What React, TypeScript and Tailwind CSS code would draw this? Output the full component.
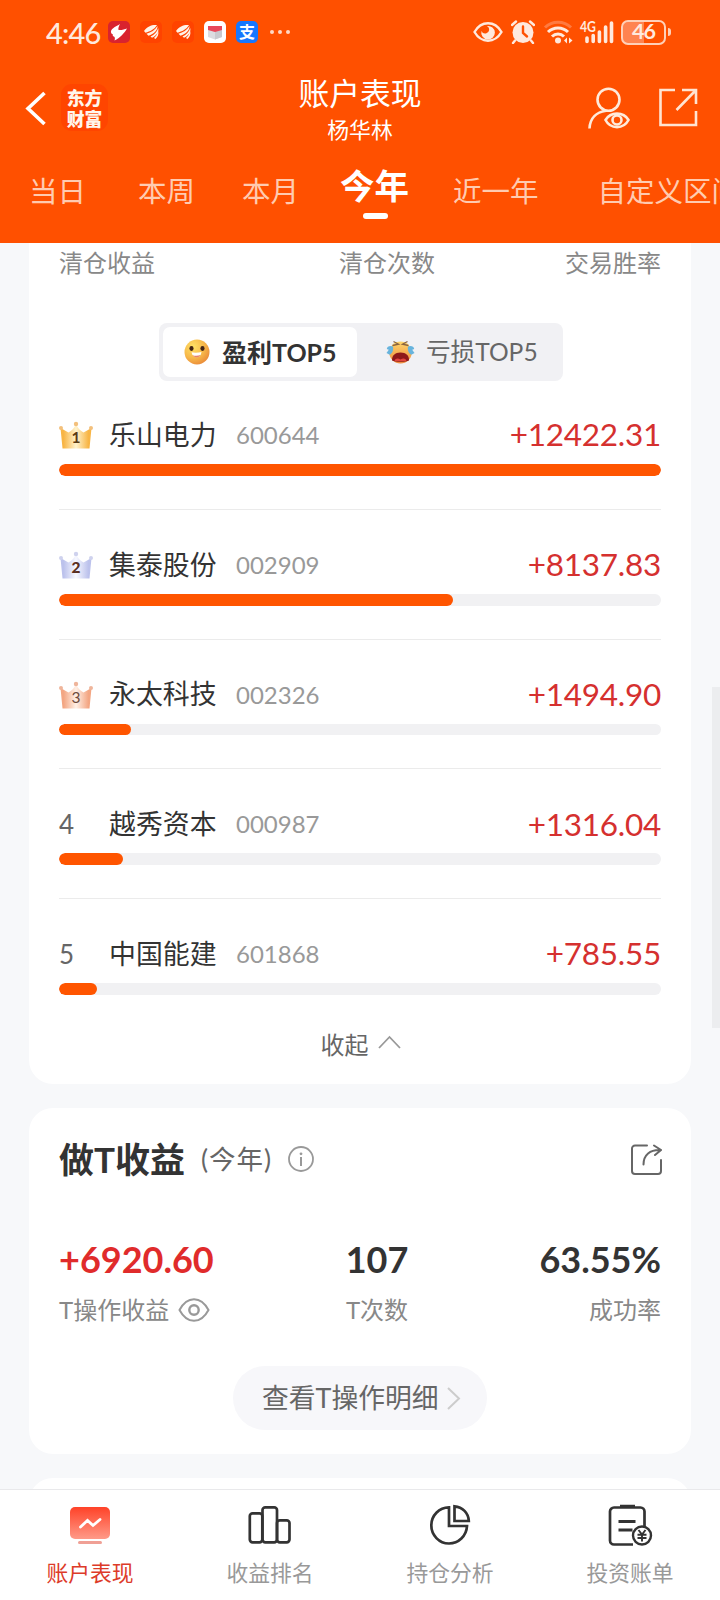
import type { ReactNode } from 'react';

const tabs = [
  { label: '当日', className: 'ml-[29px]' },
  { label: '本周', className: 'ml-[52px]' },
  { label: '本月', className: 'ml-[47px]' },
  { label: '今年', className: 'ml-[41px]', active: true },
  { label: '近一年', className: 'ml-[44px]' },
  { label: '自定义区间', className: 'ml-[59px]' },
];

const stocks = [
  { name: '乐山电力', code: '600644', profit: '+12422.31', width: 602 },
  { name: '集泰股份', code: '002909', profit: '+8137.83', width: 394 },
  { name: '永太科技', code: '002326', profit: '+1494.90', width: 72 },
  { name: '越秀资本', code: '000987', profit: '+1316.04', width: 64 },
  { name: '中国能建', code: '601868', profit: '+785.55', width: 38 },
];

const crowns = [
  { edge: '#f8b545', mid: '#fff3cd', knob: '#f3c07c', text: '#5a3a14', weight: 700 },
  { edge: '#bcc2ec', mid: '#f7f8ff', knob: '#cfd2ee', text: '#5b2f22', weight: 900 },
  { edge: '#f3a683', mid: '#fff0e6', knob: '#efb59b', text: '#6d4a3c', weight: 400 },
];

function StatusBar() {
  return (
    <div className="flex h-16 items-center pl-[46px] text-[#ffe9dd]">
      <span className="w-[55px] text-[29px] font-medium leading-none tracking-[-0.800px]">4:46</span>
      <div className="ml-[7px] flex gap-[10px]">
        <svg width="22" height="22" viewBox="0 0 22 22">
          <rect width="22" height="22" rx="5" fill="#d9232e" />
          <path d="M3 10C4 7 8 5.500 12 3c-1 2-2 4-1.500 6 3 .3 6-.5 8.500-1.500C16.500 12 12 17 6.500 19.500c.5-1.500.7-3-.5-4-1.300-.3-1.500-1-1-2C3.500 13 2.700 11.500 3 10z" fill="#fff" />
        </svg>
        {[0, 1].map((i) => (
          <svg key={i} width="22" height="22" viewBox="0 0 22 22">
            <rect width="22" height="22" rx="5" fill="#ff4300" />
            <path
              d="M4 10C7.500 5 12 3.500 17 4c-2.500 4.500-7 6.500-11.500 7.700zM6.500 12.800C11 11.500 15 9 17.500 5c.3 4-3.500 8-9 9.800zM10.500 15.500c4-2 6.500-4.500 7.700-8.500 1 4-2 7.800-6.200 9.800zM14 17c2-1.700 3.500-4 4.200-7 .8 3-.5 6-2.700 8z"
              fill="#fff3e8"
            />
          </svg>
        ))}
        <svg width="22" height="22" viewBox="0 0 22 22">
          <rect width="22" height="22" rx="5" fill="#fff" />
          <path d="M4 8l7 2.500L18 8v8l-7 2.500L4 16z" fill="#dcdce0" />
          <path d="M11 10.500L18 8v8l-7 2.500z" fill="#c9c9ce" />
          <path d="M4 5h14v4l-7 2-7-2z" fill="#e8485a" />
        </svg>
        <span className="flex size-[22px] items-center justify-center rounded-[5px] bg-[#1677ff] text-[16px] font-bold leading-none text-white">
          支
        </span>
      </div>
      <div className="ml-[12px] flex gap-[4px]">
        <i className="size-[4px] rounded-full bg-[#ffd9c4]" />
        <i className="size-[4px] rounded-full bg-[#ffd9c4]" />
        <i className="size-[4px] rounded-full bg-[#ffd9c4]" />
      </div>
      <div className="ml-auto mr-[49px] flex items-center">
        <svg width="30" height="20" viewBox="0 0 30 20" fill="none">
          <path d="M1.500 10C5 4 9.500 1.300 15 1.300S25 4 28.500 10C25 16 20.500 18.700 15 18.700S5 16 1.500 10z" stroke="currentColor" strokeWidth="2.400" />
          <path d="M14 4a4 4 0 0 1-1 7.500A4 4 0 0 1 8.500 9 6.800 6.800 0 1 0 14 4z" fill="currentColor" />
        </svg>
        <svg className="ml-[8px]" width="24" height="24" viewBox="0 0 24 24" fill="none">
          <circle cx="12" cy="12.500" r="10.500" fill="currentColor" />
          <path d="M1 5l4-3.500M23 5l-4-3.500M4 20.500L2 23M20 20.500l2 2.500" stroke="currentColor" strokeWidth="2.400" strokeLinecap="round" />
          <path d="M12 6.500V13l4 3.500" stroke="#ff5000" strokeWidth="2.400" strokeLinecap="round" />
        </svg>
        <svg className="ml-[8px]" width="30" height="24" viewBox="0 0 30 24" fill="none">
          <path d="M2 7.500C9 .5 21 .5 28 7.500" stroke="#ff7a40" strokeWidth="3" />
          <path d="M5 12c5.500-5.500 14.500-5.500 20 0" stroke="currentColor" strokeWidth="3" />
          <path d="M9 16.500c3.500-3.500 8.500-3.500 12 0" stroke="currentColor" strokeWidth="3" />
          <circle cx="15" cy="20.500" r="3" fill="currentColor" />
          <path d="M21 20.500l3-3v6zM29.500 20.500l-3.500-3v6z" fill="currentColor" />
        </svg>
        <svg className="ml-[7px] overflow-visible" width="34" height="24" viewBox="0 0 34 24">
          <text x="0" y="11.500" fontSize="14.500" fontWeight="700" fill="currentColor" textLength="16" lengthAdjust="spacingAndGlyphs">4G</text>
          <path d="M7 18v3.500M13.200 15.500v6M19.400 12v9.500M25.600 7v14.500M31.500 3v18.500" stroke="currentColor" strokeWidth="3.600" strokeLinecap="round" />
        </svg>
        <div className="ml-[7px] flex h-[25px] w-[45px] items-center justify-center rounded-[7px] border-2 border-[#ffd0b8] bg-linear-to-r from-[#ff8350] from-50% to-[#ff5000] to-50% text-[21.500px] font-bold leading-none tracking-[-1px]">
          46
        </div>
        <span className="ml-[2px] h-[8px] w-[3px] rounded-r-full bg-[#ffd0b8]" />
      </div>
    </div>
  );
}

function TitleBar() {
  return (
    <div className="flex h-[88px] items-start pl-[24px] pr-[22px]">
      <div className="flex w-[180px] items-center pt-[20px]">
        <svg width="24" height="36" viewBox="0 0 24 36" fill="none">
          <path d="M20.500 3L4 18.500 20.500 34" stroke="#fff" strokeWidth="3.600" />
        </svg>
        <div className="ml-[13px] flex size-[47px] flex-col items-center justify-center rounded-[11px] bg-[#ff4500] font-['Noto_Sans_CJK_SC',sans-serif] text-[17.800px] font-black leading-[20.500px] text-[#fff6ec]">
          <span>东方</span>
          <span>财富</span>
        </div>
      </div>
      <div className="flex flex-1 flex-col items-center pr-[2px] text-white">
        <h1 className="mt-[13px] text-[30.800px] leading-[34px]">账户表现</h1>
        <p className="mt-[6px] text-[21.800px] leading-[26px]">杨华林</p>
      </div>
      <div className="flex w-[180px] justify-end gap-[28px] pt-[23px]">
        <svg width="42" height="43" viewBox="0 0 42 43" fill="none" stroke="#ffeada" strokeWidth="2.600">
          <circle cx="20.500" cy="12.700" r="11" />
          <path d="M1.500 41.500C2 31 8.500 25 18 23.700" />
          <path d="M17.500 33c5-8.500 18-8.500 23 0-5 9.500-18 9.500-23 0z" />
          <circle cx="29" cy="33" r="4.500" />
        </svg>
        <svg width="40" height="40" viewBox="0 0 40 40" fill="none" stroke="#ffe4d2" strokeWidth="2.600">
          <path d="M17 3H2.500v35H38V24M24 3h14v14M38 3L18.500 23" />
        </svg>
      </div>
    </div>
  );
}

function Tabs() {
  return (
    <nav className="flex h-[91px] items-start overflow-hidden whitespace-nowrap pt-[14px]">
      {tabs.map((tab) =>
        tab.active ? (
          <div key={tab.label} className={`${tab.className} flex shrink-0 flex-col items-center`}>
            <span className="text-[34.500px] font-bold leading-[40px] text-white">{tab.label}</span>
            <span className="ml-[2px] mt-[7px] h-[6px] w-[25px] rounded-full bg-white" />
          </div>
        ) : (
          <span key={tab.label} className={`${tab.className} shrink-0 pt-[5px] text-[28.500px] leading-[40px] text-[#ffcbb0]`}>
            {tab.label}
          </span>
        ),
      )}
    </nav>
  );
}

function SmileFace() {
  return (
    <svg width="26" height="26" viewBox="0 0 26 26">
      <defs>
        <radialGradient id="smile" cx=".35" cy=".3" r=".8">
          <stop offset="0" stopColor="#ffe266" />
          <stop offset=".55" stopColor="#f7b84a" />
          <stop offset="1" stopColor="#e88436" />
        </radialGradient>
      </defs>
      <circle cx="13" cy="13" r="12.500" fill="url(#smile)" />
      <ellipse cx="7.500" cy="9.500" rx="2.100" ry="2.400" fill="#432415" />
      <ellipse cx="18.500" cy="9.500" rx="2.100" ry="2.400" fill="#432415" />
      <path d="M7.500 13.200c3 .7 7 .5 10-.3-.4 3.500-2.300 5.300-4.800 5.300s-4.600-1.700-5.200-5z" fill="#fff" />
      <path d="M8.700 16.200c2.300.8 5.500.6 7.900-.2-.8 1.600-2.200 2.400-3.900 2.400s-3.100-.8-4-2.200z" fill="#e8836a" />
    </svg>
  );
}

function CryFace() {
  return (
    <svg width="29" height="24" viewBox="0 0 29 24">
      <defs>
        <linearGradient id="cry" x1="0" y1="0" x2="0" y2="1">
          <stop offset="0" stopColor="#ffd76a" />
          <stop offset="1" stopColor="#ee8b3e" />
        </linearGradient>
      </defs>
      <ellipse cx="14.500" cy="12.500" rx="11.200" ry="11" fill="url(#cry)" />
      <path d="M7.500 1.500l5 2.700L6.500 5.500M21.500 1.500l-5 2.700 6 1.300" fill="none" stroke="#8a6440" strokeWidth="1.300" />
      <path d="M7 6.500C4 5 1 6.500.8 9l2 .7L.5 13l3.200 1.800C6 13.500 7.800 10.500 7 6.500zM22 6.500c3-1.500 6-.1 6.200 2.500l-2 .7 2.300 3.300-3.200 1.800C23 13.500 21.200 10.500 22 6.500z" fill="#68b4dd" />
      <path d="M6 20.500c-.3-5 3-8 8.500-8s8.800 3 8.500 8c-3 1.700-14 1.700-17 0z" fill="#8e1a1a" />
      <path d="M8.500 21c1-3 3.500-3 6-1.500 2.500-1.500 5-1.500 6 1.500z" fill="#e2463f" />
    </svg>
  );
}

function Crown({ rank }: { rank: number }) {
  const c = crowns[rank - 1];
  const id = `crown${rank}`;
  return (
    <svg width="34" height="28" viewBox="0 0 34 28">
      <defs>
        <linearGradient id={id}>
          <stop offset=".1" stopColor={c.edge} />
          <stop offset=".5" stopColor={c.mid} />
          <stop offset=".9" stopColor={c.edge} />
        </linearGradient>
      </defs>
      <path d="M1.500 7l8 4.500c3-1.500 6-4.500 7.500-8.500 1.500 4 4.500 7 7.500 8.500l8-4.500L30.500 27.500h-27z" fill={`url(#${id})`} />
      <circle cx="2" cy="7" r="2" fill={c.knob} />
      <circle cx="17" cy="3" r="2.200" fill={c.knob} />
      <circle cx="32" cy="7" r="2" fill={c.knob} />
      <text x="17" y="22" textAnchor="middle" fontFamily="Lato, sans-serif" fontSize="15.500" fontWeight={c.weight} fill={c.text}>
        {rank}
      </text>
    </svg>
  );
}

function RankCard() {
  return (
    <section className="h-[841px] rounded-b-[24px] bg-white px-[30px] pt-[8px]">
      <div className="flex justify-between text-[24px] leading-6 text-[#888]">
        <span>清仓收益</span>
        <span className="ml-[54px]">清仓次数</span>
        <span>交易胜率</span>
      </div>
      <div className="ml-[100px] mt-[48px] flex h-[58px] w-[404px] rounded-[8px] bg-[#f1f1f4] p-[4px] leading-none">
        <div className="flex w-[194px] items-center gap-[12px] rounded-[7px] bg-white pl-[21px] text-[25px] font-bold text-[#333]">
          <SmileFace />
          <span className="pt-px">盈利TOP5</span>
        </div>
        <div className="flex items-center gap-[11px] pl-[29px] text-[24.600px] text-[#666]">
          <CryFace />
          <span className="pt-px">亏损TOP5</span>
        </div>
      </div>
      <ul className="mt-[34px]">
        {stocks.map((stock, i) => (
          <li key={stock.code} className={i > 0 ? 'h-[129.700px] border-t border-[#ebebeb] pt-[35px]' : 'h-[94px]'}>
            <div className="flex h-[40px] items-center">
              <span className="w-[50px] text-[26px] leading-none text-[#666]">
                {i < 3 ? <Crown rank={i + 1} /> : i + 1}
              </span>
              <span className="w-[127px] text-[26.900px] leading-none text-[#333]">{stock.name}</span>
              <span className="text-[24px] leading-none text-[#999]">{stock.code}</span>
              <span className="ml-auto text-[31.500px] leading-none tracking-[-0.250px] text-[#d5302f]">{stock.profit}</span>
            </div>
            <div className="mt-[9px] h-[11.500px] overflow-hidden rounded-full bg-[#f1f1f3]">
              <div className="h-full rounded-full bg-[#ff5500]" style={{ width: stock.width }} />
            </div>
          </li>
        ))}
      </ul>
      <div className="mt-[5px] flex items-center justify-center gap-[9px] pl-px text-[24px] leading-none text-[#666]">
        <span>收起</span>
        <svg className="mb-[6px]" width="23" height="14" viewBox="0 0 23 14" fill="none">
          <path d="M1 13L11.500 2 22 13" stroke="#999" strokeWidth="1.800" />
        </svg>
      </div>
    </section>
  );
}

function Stat({ value, label, className }: { value: string; label: ReactNode; className: string }) {
  return (
    <div className={`flex w-[200px] flex-col ${className}`}>
      <span className="text-[36px] font-bold leading-[40px]">{value}</span>
      <span className="mt-[16px] flex items-center gap-[9px] text-[24px] leading-[30px] text-[#888]">{label}</span>
    </div>
  );
}

function TradeCard() {
  return (
    <section className="h-[346px] rounded-[24px] bg-white px-[30px] pt-[31px]">
      <div className="flex h-[40px] items-center">
        <h2 className="text-[35px] font-bold leading-none text-[#333]">做T收益</h2>
        <span className="ml-[16px] text-[26.500px] leading-none tracking-[1px] text-[#666]">(今年)</span>
        <svg className="ml-[16px]" width="26" height="26" viewBox="0 0 26 26" fill="none">
          <circle cx="13" cy="13" r="12" stroke="#999" strokeWidth="1.800" />
          <path d="M13 11v9" stroke="#999" strokeWidth="2" />
          <circle cx="13" cy="7.800" r="1.400" fill="#999" />
        </svg>
        <svg className="-mr-px ml-auto" width="32" height="31" viewBox="0 0 32 31" fill="none" stroke="#666" strokeWidth="2" strokeLinecap="round">
          <path d="M17 1.500H5a3 3 0 0 0-3 3V27a3 3 0 0 0 3 3h23a3 3 0 0 0 3-3V16" />
          <path d="M13.500 20.500C13.500 11 20 5.500 30.500 6M24 1.500L31 6l-6 5" />
        </svg>
      </div>
      <div className="mt-[60px] flex justify-between">
        <Stat
          value="+6920.60"
          className="items-start text-[#e02b2b]"
          label={
            <>
              T操作收益
              <svg width="32" height="24" viewBox="0 0 32 24" fill="none" stroke="#999" strokeWidth="2">
                <path d="M1.500 12C5.500 4.500 10 1.200 16 1.200S26.500 4.500 30.500 12C26.500 19.500 22 22.800 16 22.800S5.500 19.500 1.500 12z" />
                <circle cx="16" cy="12" r="4.700" strokeWidth="2.400" />
              </svg>
            </>
          }
        />
        <Stat value="107" label="T次数" className="items-center pl-[34px] text-[#333]" />
        <Stat value="63.55%" label="成功率" className="items-end text-[#333]" />
      </div>
      <button className="mx-auto mt-[41px] flex h-[64px] w-[254px] items-center rounded-full bg-[#f7f7fa] pl-[29px] text-[26.800px] leading-none text-[#666]">
        查看T操作明细
        <svg className="ml-[8px]" width="14" height="23" viewBox="0 0 14 23" fill="none">
          <path d="M1 1l11 10.500L1 22" stroke="#ccc" strokeWidth="2" />
        </svg>
      </button>
    </section>
  );
}

function NavItem({ label, active, children }: { label: string; active?: boolean; children: ReactNode }) {
  return (
    <div className={`flex w-1/4 flex-col items-center text-[21.800px] ${active ? 'text-[#dd3b29]' : 'text-[#999]'}`}>
      <svg width="46" height="46" viewBox="0 0 46 46" fill="none" stroke="#333" strokeWidth="2.700">
        {children}
      </svg>
      <span className="mt-[9px] leading-[30px]">{label}</span>
    </div>
  );
}

function BottomNav() {
  return (
    <footer className="flex h-[111px] shrink-0 border-t border-[#e9e9eb] bg-white pt-[13px]">
      <NavItem label="账户表现" active>
        <defs>
          <linearGradient id="board" x1="0" y1="0" x2="0" y2="1">
            <stop offset="0" stopColor="#ff4228" />
            <stop offset="1" stopColor="#ff9a88" />
          </linearGradient>
        </defs>
        <rect x="3" y="4" width="40" height="32" rx="5" fill="url(#board)" stroke="none" />
        <path d="M13.500 24l7-6.500 5.500 5 7-6" stroke="#fff" strokeWidth="2.800" strokeLinecap="round" />
        <rect x="11" y="38" width="24" height="3" rx="1.500" fill="#f0a095" stroke="none" />
      </NavItem>
      <NavItem label="收益排名">
        <rect x="2.800" y="10.300" width="12.500" height="29" rx="2.800" />
        <rect x="15.500" y="4.300" width="14.500" height="35" rx="2.800" />
        <rect x="30" y="17.300" width="12.500" height="22" rx="2.800" />
      </NavItem>
      <NavItem label="持仓分析">
        <path d="M22 4.300C12 4.500 4.300 12.500 4.300 22.300S12 40.500 22 40.500c9.500 0 17.500-7.500 18-17.500H22z" />
        <path d="M27.500 3.300v14.700h14.300C41.500 10 35.500 4 27.500 3.300z" />
      </NavItem>
      <NavItem label="投资账单">
        <path d="M26 41.500H7a4 4 0 0 1-4-4v-29a4 4 0 0 1 4-4h26.500a4 4 0 0 1 4 4V23" />
        <path d="M13 3.300h15M11.500 18.500h17M11.500 27h14" strokeWidth="3" />
        <circle cx="35" cy="32.500" r="9" fill="#fff" strokeWidth="2.400" />
        <path d="M31.500 27l3.500 4.500 3.500-4.500M35 31.500v7M30.500 31.800h9M30.500 35h9" strokeWidth="1.900" />
      </NavItem>
    </footer>
  );
}

export default function App() {
  return (
    <div className="relative flex h-[1600px] w-[720px] flex-col overflow-hidden bg-[#f7f8fa] font-['Lato','Noto_Sans_CJK_SC',sans-serif]">
      <header className="shrink-0 bg-[#ff5000]">
        <StatusBar />
        <TitleBar />
        <Tabs />
      </header>
      <main className="flex min-h-0 flex-1 flex-col gap-[24px] overflow-hidden px-[29px] [&>section]:shrink-0">
        <RankCard />
        <TradeCard />
        <section className="h-[60px] rounded-t-[24px] bg-white" />
      </main>
      <div className="absolute right-0 top-[687px] h-[341px] w-[8px] bg-[#ecedef]" />
      <BottomNav />
    </div>
  );
}
